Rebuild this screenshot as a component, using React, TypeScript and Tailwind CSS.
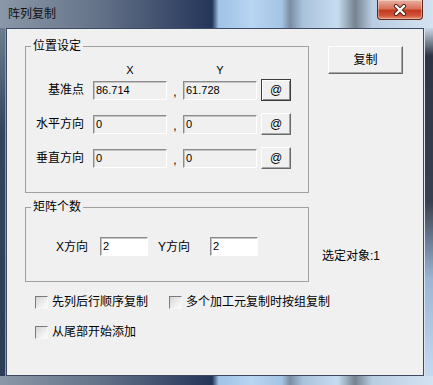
const font = "font-['Liberation_Sans','Noto_Sans_CJK_SC',sans-serif]";

function SunkenInput({ value, white, className }: { value: string; white?: boolean; className: string }) {
  return (
    <div
      className={`h-[19px] flex items-center pl-[2px] text-[11px] leading-[13px] text-black border border-t-[#8c8c8c] border-l-[#8c8c8c] border-b-white border-r-white shadow-[inset_1px_1px_0_#c4c4c4] ${white ? "bg-white" : "bg-[#f0f0f0]"} ${className}`}
    >
      {value}
    </div>
  );
}

function PickButton({ focused }: { focused?: boolean }) {
  return (
    <div
      className={`ml-[4px] w-[30px] h-[22px] flex items-center justify-center text-[12px] bg-[#f0f0f0] ${
        focused
          ? "border border-[#3c3c3c] shadow-[inset_1px_1px_0_#fff,inset_-1px_-1px_0_#8a8a8a]"
          : "border border-t-white border-l-white border-r-[#6a6a6a] border-b-[#6a6a6a] shadow-[inset_-1px_-1px_0_#a8a8a8]"
      }`}
    >
      @
    </div>
  );
}

function CheckBox({ label, className = "" }: { label: string; className?: string }) {
  return (
    <div className={`flex items-center shrink-0 whitespace-nowrap ${className}`}>
      <div className="w-[13px] h-[13px] shrink-0 border border-t-[#7a7a7a] border-l-[#7a7a7a] border-b-[#f6f6f6] border-r-[#f6f6f6] bg-[linear-gradient(135deg,#d6d6d6,#ffffff)]" />
      <span className="ml-[4px] text-[12px] leading-[14px] text-black">{label}</span>
    </div>
  );
}

export default function App() {
  const rows = [
    { label: "基准点", x: "86.714", y: "61.728", focused: true },
    { label: "水平方向", x: "0", y: "0" },
    { label: "垂直方向", x: "0", y: "0" },
  ];

  return (
    <div
      className={`w-[433px] h-[385px] flex flex-col overflow-hidden ${font} bg-[linear-gradient(to_right,#8a97a8_0%,#66748a_22%,#2c3c5e_46%,#25365a_49%,#9fc2e6_50.5%,#b8d5f1_58%,#a6c5e5_65%,#7b8da3_67%,#aac3dd_70%,#c7dcf0_78%,#76838f_82%,#b9cde2_86%,#d4e3f2_100%)]`}
    >
      {/* title bar */}
      <div className="h-[28px] flex items-start">
        <span className="pl-[8px] pt-[7px] text-[12px] leading-[14px] text-[#111]">阵列复制</span>
        <div className="ml-auto mr-[10px] w-[46px] h-[20px] rounded-b-[4px] border border-t-0 border-[#5e2a20] bg-[linear-gradient(to_bottom,#eab0a2_0%,#d9735c_45%,#c23a20_55%,#cf5035_80%,#e88c6c_100%)] shadow-[inset_0_0_0_1px_rgba(255,255,255,0.35)] flex items-center justify-center">
          <svg width="14" height="12" viewBox="0 0 14 12">
            <path d="M3 2 L11 10 M11 2 L3 10" stroke="#4a1d14" strokeWidth="4.2" strokeLinecap="round" />
            <path d="M3 2 L11 10 M11 2 L3 10" stroke="#ffffff" strokeWidth="2.4" strokeLinecap="round" />
          </svg>
        </div>
      </div>

      <div className="flex flex-1">
        <div className="w-[6px] bg-[linear-gradient(to_bottom,#6e7c90,#33435e_30%,#2d3d58)] shadow-[inset_-1px_0_0_#8898b0]" />

        {/* client area */}
        <div className="flex-1 border border-[#3b4a62] bg-[#f0f0f0] flex pl-[18px] pt-[10px] text-black">
          <div className="w-[284px] shrink-0 flex flex-col">
            <fieldset className="h-[154px] border border-[#a0a0a0]">
              <legend className="ml-[5px] px-[2px] text-[12px] leading-[14px]">位置设定</legend>
              <div className="pt-[10px]">
                <div className="h-[14px] flex text-[11px] leading-[14px]">
                  <div className="w-[67px]" />
                  <div className="w-[74px] text-center">X</div>
                  <div className="w-[16px]" />
                  <div className="w-[74px] text-center">Y</div>
                </div>
                <div className="mt-[2px] flex flex-col gap-[12px]">
                  {rows.map((r) => (
                    <div key={r.label} className="h-[22px] flex items-center">
                      <div className="w-[58px] text-right text-[12px] leading-[14px]">{r.label}</div>
                      <SunkenInput value={r.x} className="ml-[9px] w-[74px]" />
                      <div className="w-[16px] text-center text-[12px] leading-[14px] pt-[3px]">,</div>
                      <SunkenInput value={r.y} className="w-[74px]" />
                      <PickButton focused={r.focused} />
                    </div>
                  ))}
                </div>
              </div>
            </fieldset>

            <fieldset className="mt-[7px] h-[82px] border border-[#a0a0a0]">
              <legend className="ml-[5px] px-[2px] text-[12px] leading-[14px]">矩阵个数</legend>
              <div className="pt-[23px] pl-[30px] h-[19px] flex items-center box-content">
                <div className="w-[44px] text-[12px] leading-[14px]">X方向</div>
                <SunkenInput value="2" white className="w-[48px]" />
                <div className="ml-[10px] w-[52px] text-[12px] leading-[14px]">Y方向</div>
                <SunkenInput value="2" white className="w-[48px]" />
              </div>
            </fieldset>

            <div className="mt-[12px] pl-[10px] flex flex-col gap-[14px]">
              <div className="h-[16px] flex items-center">
                <CheckBox label="先列后行顺序复制" className="w-[134px]" />
                <CheckBox label="多个加工元复制时按组复制" />
              </div>
              <div className="h-[16px] flex items-center">
                <CheckBox label="从尾部开始添加" />
              </div>
            </div>
          </div>

          <div className="ml-[13px] flex flex-col">
            <div className="ml-[6px] mt-[7px] w-[75px] h-[28px] flex items-center justify-center text-[12px] bg-[#f0f0f0] border border-t-white border-l-white border-r-[#6a6a6a] border-b-[#6a6a6a] shadow-[inset_-1px_-1px_0_#a8a8a8]">
              复制
            </div>
            <div className="mt-[175px] text-[12px] leading-[14px]">选定对象:1</div>
          </div>
        </div>

        <div className="w-[9px] bg-[linear-gradient(to_bottom,#c8d8ea_0%,#2e3440_8%,#3a414e_50%,#9ab6d4_72%,#c4daf0_100%)] shadow-[inset_1px_0_0_#dde6f0]" />
      </div>
      <div className="h-[9px]" />
    </div>
  );
}
